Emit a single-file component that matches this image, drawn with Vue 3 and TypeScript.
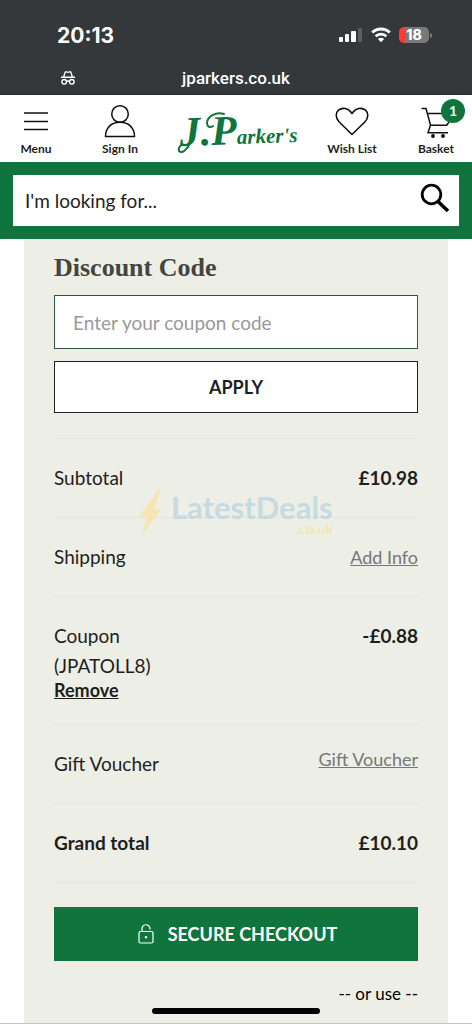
<script setup lang="ts">
import { ref } from 'vue'

interface TotalRow {
  label: string
  code?: string
  amount?: string
  link?: string
  linkTop?: boolean
  strong?: boolean
}

const query = ref('')
const coupon = ref('')
const basketCount = ref(1)

const rows: TotalRow[] = [
  { label: 'Subtotal', amount: '£10.98' },
  { label: 'Shipping', link: 'Add Info' },
  { label: 'Coupon', code: '(JPATOLL8)', amount: '-£0.88' },
  { label: 'Gift Voucher', link: 'Gift Voucher', linkTop: true },
  { label: 'Grand total', amount: '£10.10', strong: true },
]
</script>

<template>
  <div class="screen">
    <div class="browser-bar">
      <div class="status">
        <span class="time">20:13</span>
        <div class="indicators">
          <svg width="24" height="16" viewBox="0 0 24 16" aria-hidden="true">
            <rect x="0" y="10" width="4" height="5" rx="1" fill="#fff" />
            <rect x="6" y="7" width="4" height="8" rx="1" fill="#fff" />
            <rect x="12" y="4" width="5" height="11" rx="1" fill="#fff" />
            <rect x="19" y="1" width="4" height="14" rx="1" fill="#5b5d60" />
          </svg>
          <svg width="20" height="16" viewBox="0 0 20 16" aria-hidden="true">
            <path d="M1.2 5.6a12.6 12.6 0 0 1 17.6 0" fill="none" stroke="#fff" stroke-width="2.8" />
            <path d="M4.6 9.3a7.8 7.8 0 0 1 10.8 0" fill="none" stroke="#fff" stroke-width="2.6" />
            <path d="M10 15.2 6.9 12a4.4 4.4 0 0 1 6.2 0z" fill="#fff" />
          </svg>
          <div class="battery"><span class="level">18</span><span class="cap"></span></div>
        </div>
      </div>
      <div class="address">
        <svg class="private" width="16" height="16" viewBox="0 0 16 16" fill="none" stroke="#fff" stroke-width="1.4" aria-hidden="true">
          <path d="M1 7.3h14M3.6 7 5 2.6c.2-.6.7-.9 1.3-.7l1.7.4 1.7-.4c.6-.2 1.1.1 1.3.7L12.4 7" />
          <circle cx="4.2" cy="11.8" r="2.3" />
          <circle cx="11.8" cy="11.8" r="2.3" />
          <path d="M6.5 11.4c1-.6 2-.6 3 0" />
        </svg>
        <span class="domain">jparkers.co.uk</span>
      </div>
    </div>

    <header class="site-header">
      <button type="button" class="nav-item">
        <svg width="34" height="36" viewBox="0 0 34 36" stroke="#111" stroke-width="1.5" aria-hidden="true">
          <path d="M5 10h24M5 18.5h24M5 26.5h24" />
        </svg>
        <span>Menu</span>
      </button>
      <a href="#signin" class="nav-item">
        <svg width="34" height="36" viewBox="0 0 34 36" fill="none" stroke="#111" stroke-width="1.5" aria-hidden="true">
          <circle cx="17" cy="11" r="8.3" />
          <path d="M2.5 33.5C2.5 24 9 19.3 17 19.3S31.5 24 31.5 33.5z" />
        </svg>
        <span>Sign In</span>
      </a>
      <a href="#home" class="logo" aria-label="J.Parker's home">
        <svg width="124" height="58" viewBox="0 0 124 58" aria-hidden="true">
          <text class="script" x="6" y="43" transform="rotate(-2 6 43)"><tspan class="capital">J.P</tspan><tspan class="small">arker's</tspan></text>
          <g fill="none" stroke="#10753c" stroke-linecap="round">
            <path d="M11 42C7 41 4 44 5 48c3 3 8-1 11-8" stroke-width="2" />
            <path d="M50 11c-8-3-17 3-17 9 0 4 3 5 6 3" stroke-width="2" />
          </g>
        </svg>
      </a>
      <a href="#wishlist" class="nav-item">
        <svg width="34" height="36" viewBox="0 0 34 36" fill="none" stroke="#111" stroke-width="1.6" stroke-linejoin="round" aria-hidden="true">
          <path d="M17 31.5 4 18.7C.3 15 .5 9.7 3.5 7.2c3.8-3.2 9.8-2.2 13.5 3.3 3.7-5.5 9.7-6.5 13.5-3.3 3 2.5 3.2 7.8-.5 11.500z" />
        </svg>
        <span>Wish List</span>
      </a>
      <a href="#basket" class="nav-item basket">
        <svg width="34" height="36" viewBox="0 0 34 36" fill="none" stroke="#111" stroke-width="1.5" aria-hidden="true">
          <path d="M2.5 5.500H7L11.500 22 9 29.700h20M8.500 10.500H30M11.500 22.300h16.200L30 19" />
          <circle cx="14" cy="33" r="1.2" fill="#111" />
          <circle cx="24" cy="33" r="1.2" fill="#111" />
        </svg>
        <span>Basket</span>
        <span class="badge">{{ basketCount }}</span>
      </a>
    </header>

    <form class="search-bar" role="search" @submit.prevent>
      <div class="search-box">
        <input v-model="query" type="text" aria-label="Search" placeholder="I'm looking for..." />
        <button type="submit" aria-label="Search">
          <svg width="32" height="32" viewBox="0 0 32 32" fill="none" stroke="#000" aria-hidden="true">
            <circle cx="12.5" cy="12.5" r="9.3" stroke-width="2.8" />
            <path d="m19 19.5 10 9.5" stroke-width="3.5" />
          </svg>
        </button>
      </div>
    </form>

    <main class="panel">
      <form class="coupon" @submit.prevent>
        <label for="coupon">Discount Code</label>
        <input id="coupon" v-model="coupon" type="text" placeholder="Enter your coupon code" />
        <button type="submit">APPLY</button>
      </form>

      <div class="totals-wrap">
        <table class="totals">
          <tbody>
            <tr v-for="row in rows" :key="row.label" :class="{ strong: row.strong }">
              <th scope="row">
                {{ row.label }}
                <template v-if="row.code">
                  <span class="code">{{ row.code }}</span>
                  <button type="button" class="remove">Remove</button>
                </template>
              </th>
              <td :class="{ raised: row.linkTop }">
                <a v-if="row.link" href="#details">{{ row.link }}</a>
                <template v-else>{{ row.amount }}</template>
              </td>
            </tr>
          </tbody>
        </table>
        <div class="watermark" aria-hidden="true">
          <svg width="26" height="50" viewBox="0 0 26 50">
            <path d="M24 1 2 32h8L5 49l20-25h-8z" fill="#f6e4a6" />
          </svg>
          <div class="watermark-text">
            <span class="brand">LatestDeals</span>
            <span class="tld">.co.uk</span>
          </div>
        </div>
      </div>

      <button type="button" class="checkout">
        <svg width="16" height="20" viewBox="0 0 16 20" fill="none" stroke="#fff" stroke-width="1.2" aria-hidden="true">
          <rect x="1" y="7.5" width="14" height="11.5" rx="1.5" />
          <path d="M4 7.5V5a4 4 0 0 1 8-.5v1" />
          <path d="M8 12v2.4M6.8 13.2h2.4" />
        </svg>
        SECURE CHECKOUT
      </button>
      <p class="or-use">-- or use --</p>
    </main>
    <div class="home-indicator"></div>
  </div>
</template>

<style>
body {
  margin: 0;
  background: #fff;
}
</style>

<style scoped>
.screen {
  position: relative;
  min-height: 100vh;
  box-sizing: border-box;
  display: flex;
  flex-direction: column;
  border-bottom: 1px solid #c2c3be;
  font-family: Lato, "Liberation Sans", sans-serif;
  font-size: 19px;
  color: #1e1e1c;
}
.screen *,
.screen *::before {
  box-sizing: border-box;
}
button,
input {
  font: inherit;
  color: inherit;
  border-radius: 0;
}
a {
  color: inherit;
}
.browser-bar {
  background: #35383b;
  color: #fff;
  font-family: Inter, sans-serif;
  padding: 20px 40px 4px 57px;
  border-bottom: 1px solid #2c2d33;
}
.status {
  display: flex;
  justify-content: space-between;
  align-items: center;
  height: 30px;
}
.time {
  font-size: 21px;
  font-weight: 700;
}
.indicators {
  display: flex;
  align-items: center;
  gap: 8px;
}
.battery {
  display: flex;
  align-items: center;
  gap: 1px;
}
.level {
  width: 30px;
  height: 16px;
  border-radius: 5px;
  background: linear-gradient(90deg, #ff3b36 6px, #77797b 6px);
  font-size: 14px;
  line-height: 16px;
  font-weight: 800;
  text-align: center;
}
.cap {
  width: 2px;
  height: 5px;
  border-radius: 0 2px 2px 0;
  background: #77797b;
}
.address {
  display: grid;
  grid-template-columns: 1fr auto 1fr;
  align-items: center;
  height: 40px;
  padding: 16px 0 0 3px;
  margin-right: 20px;
}
.domain {
  font-family: Roboto, sans-serif;
  font-size: 17px;
  font-weight: 500;
  line-height: 20px;
}
.site-header {
  display: grid;
  grid-template-columns: 72fr 96fr 136fr 96fr 72fr;
  height: 67px;
  background: #fff;
}
.nav-item {
  position: relative;
  display: flex;
  flex-direction: column;
  align-items: center;
  padding: 8px 0 0;
  border: 0;
  background: none;
  font-size: 12px;
  font-weight: 700;
  line-height: 20px;
  text-decoration: none;
}
.logo {
  display: flex;
  justify-content: center;
  padding-top: 8px;
}
.script {
  font-family: "Liberation Serif", serif;
  font-style: italic;
  font-weight: 700;
  fill: #10753c;
}
.capital {
  font-size: 42px;
}
.small {
  font-size: 21px;
}
.badge {
  position: absolute;
  top: 4px;
  right: 7px;
  width: 24px;
  height: 24px;
  border-radius: 50%;
  background: #10753c;
  color: #fff;
  font-size: 14px;
  line-height: 24px;
  text-align: center;
}
.search-bar {
  padding: 13px;
  background: #10753c;
}
.search-box {
  display: flex;
  align-items: center;
  height: 51px;
  padding: 0 8px 0 12px;
  background: #fff;
}
.search-box input {
  flex: 1;
  min-width: 0;
  padding: 0;
  border: 0;
  outline: 0;
  background: none;
}
.search-box input::placeholder {
  color: #222;
  opacity: 1;
}
.search-box button {
  display: flex;
  padding: 0 0 6px;
  border: 0;
  background: none;
}
.panel {
  flex: 1;
  margin: 0 24px;
  padding: 14px 30px 16px;
  background: #edeee6;
}
.coupon {
  display: flex;
  flex-direction: column;
  gap: 12px;
  padding-bottom: 25px;
}
.coupon label {
  font-family: "Liberation Serif", serif;
  font-size: 26px;
  font-weight: 700;
  line-height: 30px;
  color: #45453f;
}
.coupon input {
  height: 54px;
  padding: 0 18px;
  border: 1px solid #2d5940;
  background: #fff;
}
.coupon input::placeholder {
  color: #999;
  opacity: 1;
}
.coupon button {
  height: 52px;
  border: 1px solid #222;
  background: #fff;
  font-size: 18px;
  font-weight: 700;
}
.totals-wrap {
  position: relative;
}
.totals {
  width: 100%;
  border-spacing: 0;
  border-top: 1px solid #e5e6df;
  line-height: 30px;
}
.totals th,
.totals td {
  padding: 24px 0;
  border-bottom: 1px solid #e5e6df;
  vertical-align: top;
  text-align: left;
  font-weight: 400;
}
.totals td {
  text-align: right;
  font-weight: 700;
}
.totals .strong th {
  font-weight: 700;
}
.totals a {
  color: #777;
  font-size: 18px;
  font-weight: 400;
}
.totals .raised {
  line-height: 20px;
}
.code {
  display: block;
}
.remove {
  display: block;
  padding: 0;
  border: 0;
  background: none;
  font-size: 18px;
  font-weight: 700;
  line-height: 19px;
  text-decoration: underline;
}
.watermark {
  position: absolute;
  top: 47px;
  left: 83px;
  display: flex;
  gap: 8px;
  opacity: 0.8;
  pointer-events: none;
}
.watermark-text {
  display: flex;
  flex-direction: column;
  align-items: flex-end;
  padding-top: 6px;
}
.brand {
  font-size: 31px;
  font-weight: 700;
  line-height: 32px;
  color: #bcd7e0;
}
.tld {
  font-size: 14px;
  font-weight: 700;
  line-height: 12px;
  color: #f6e4a6;
}
.checkout {
  display: flex;
  align-items: center;
  justify-content: center;
  gap: 14px;
  width: 100%;
  height: 54px;
  margin-top: 24px;
  padding: 0 0 0 3px;
  border: 0;
  background: #10753c;
  color: #fff;
  font-size: 18px;
  font-weight: 700;
}
.or-use {
  margin: 22px 0 0;
  font-size: 17px;
  line-height: 22px;
  text-align: right;
  color: #000;
}
.home-indicator {
  position: absolute;
  bottom: 9px;
  left: 50%;
  width: 168px;
  height: 6px;
  margin-left: -84px;
  border-radius: 3px;
  background: #000;
}
</style>
